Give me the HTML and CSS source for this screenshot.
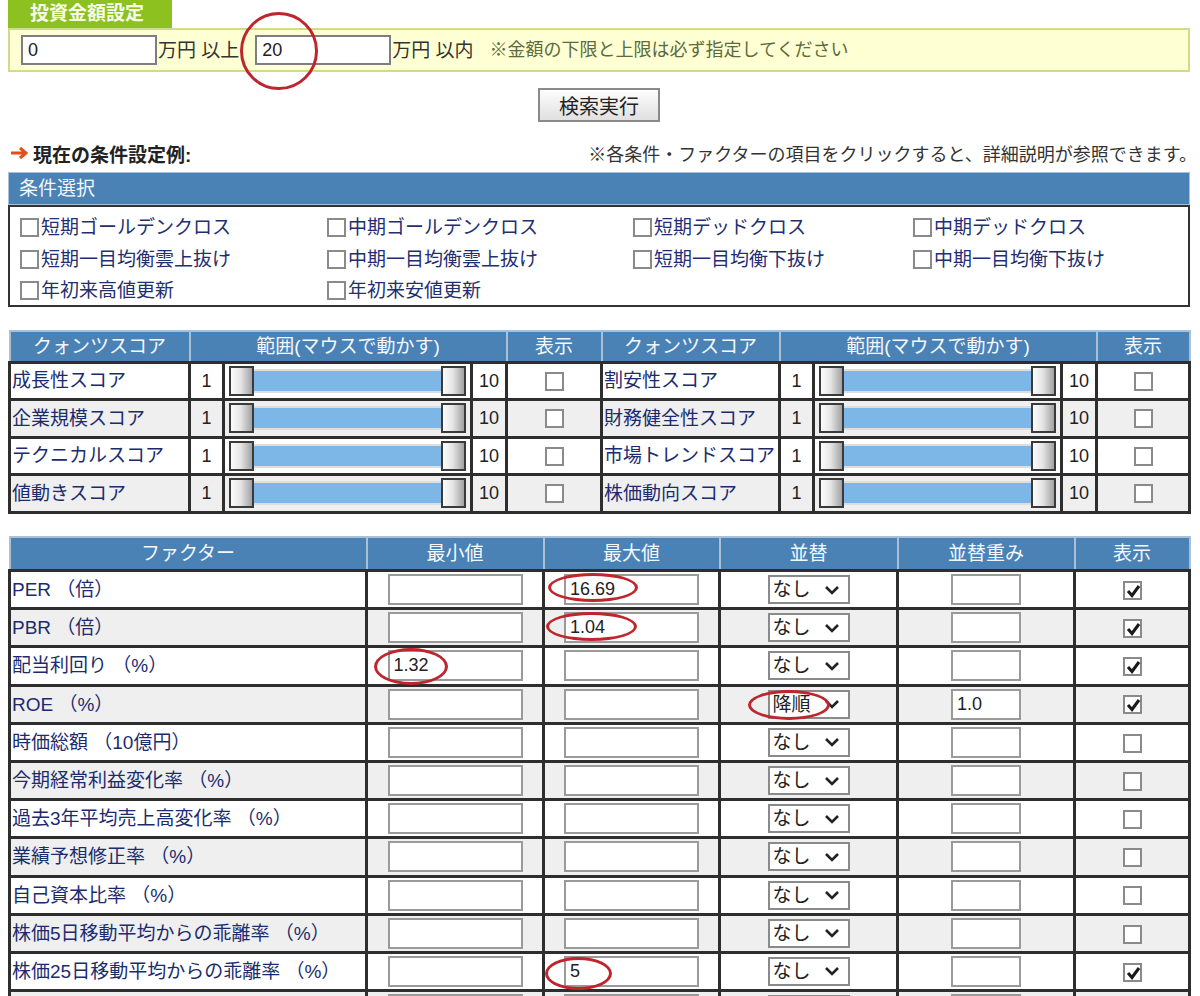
FILE: index.html
```html
<!DOCTYPE html>
<html lang="ja">
<head>
	<meta charset="UTF-8">
	<title>スクリーニング条件設定</title>
	<link rel="stylesheet" href="styles.css">
</head>
<body>
<div class="page">

	<!-- 投資金額 -->
	<div class="tab">投資金額設定</div>
	<div class="invest-box">
		<input class="amount" type="text" value="0"><span class="unit">万円 以上</span>
		<input class="amount" type="text" value="20"><span class="unit">万円 以内</span>
		<span class="note">※金額の下限と上限は必ず指定してください</span>
	</div>

	<button class="search" type="button">検索実行</button>

	<div class="cond-title">
		<span class="lead"><svg class="arrow" width="18" height="14" viewBox="0 0 18 14"><path d="M1 7 H15 M10 2 L16 7 L10 12" fill="none" stroke="#e0501a" stroke-width="3"/></svg>現在の条件設定例:</span>
		<span class="hint">※各条件・ファクターの項目をクリックすると、詳細説明が参照できます。</span>
	</div>

	<!-- 条件選択 -->
	<div class="jouken">
		<div class="jouken-head">条件選択</div>
		<div class="jouken-body">
			<label class="item"><span class="cb"></span>短期ゴールデンクロス</label>
			<label class="item"><span class="cb"></span>中期ゴールデンクロス</label>
			<label class="item"><span class="cb"></span>短期デッドクロス</label>
			<label class="item"><span class="cb"></span>中期デッドクロス</label>
			<label class="item"><span class="cb"></span>短期一目均衡雲上抜け</label>
			<label class="item"><span class="cb"></span>中期一目均衡雲上抜け</label>
			<label class="item"><span class="cb"></span>短期一目均衡下抜け</label>
			<label class="item"><span class="cb"></span>中期一目均衡下抜け</label>
			<label class="item"><span class="cb"></span>年初来高値更新</label>
			<label class="item"><span class="cb"></span>年初来安値更新</label>
		</div>
	</div>

	<!-- クォンツスコア -->
	<table class="grid quants">
		<colgroup>
			<col style="width:180px"><col style="width:34px"><col style="width:248px"><col style="width:35px"><col style="width:95px">
			<col style="width:178px"><col style="width:34px"><col style="width:248px"><col style="width:35px"><col style="width:93px">
		</colgroup>
		<thead>
			<tr>
				<th>クォンツスコア</th><th colspan="3">範囲(マウスで動かす)</th><th>表示</th>
				<th>クォンツスコア</th><th colspan="3">範囲(マウスで動かす)</th><th>表示</th>
			</tr>
		</thead>
		<tbody>
			<tr>
				<td class="name">成長性スコア</td><td class="num">1</td><td><div class="slider"><span class="handle"></span><span class="track"></span><span class="handle"></span></div></td><td class="num">10</td><td class="show"><span class="cb"></span></td>
				<td class="name">割安性スコア</td><td class="num">1</td><td><div class="slider"><span class="handle"></span><span class="track"></span><span class="handle"></span></div></td><td class="num">10</td><td class="show"><span class="cb"></span></td>
			</tr>
			<tr>
				<td class="name">企業規模スコア</td><td class="num">1</td><td><div class="slider"><span class="handle"></span><span class="track"></span><span class="handle"></span></div></td><td class="num">10</td><td class="show"><span class="cb"></span></td>
				<td class="name">財務健全性スコア</td><td class="num">1</td><td><div class="slider"><span class="handle"></span><span class="track"></span><span class="handle"></span></div></td><td class="num">10</td><td class="show"><span class="cb"></span></td>
			</tr>
			<tr>
				<td class="name">テクニカルスコア</td><td class="num">1</td><td><div class="slider"><span class="handle"></span><span class="track"></span><span class="handle"></span></div></td><td class="num">10</td><td class="show"><span class="cb"></span></td>
				<td class="name">市場トレンドスコア</td><td class="num">1</td><td><div class="slider"><span class="handle"></span><span class="track"></span><span class="handle"></span></div></td><td class="num">10</td><td class="show"><span class="cb"></span></td>
			</tr>
			<tr>
				<td class="name">値動きスコア</td><td class="num">1</td><td><div class="slider"><span class="handle"></span><span class="track"></span><span class="handle"></span></div></td><td class="num">10</td><td class="show"><span class="cb"></span></td>
				<td class="name">株価動向スコア</td><td class="num">1</td><td><div class="slider"><span class="handle"></span><span class="track"></span><span class="handle"></span></div></td><td class="num">10</td><td class="show"><span class="cb"></span></td>
			</tr>
		</tbody>
	</table>

	<!-- ファクター -->
	<table class="grid factors">
		<colgroup>
			<col style="width:357px"><col style="width:177px"><col style="width:176px"><col style="width:178px"><col style="width:177px"><col style="width:115px">
		</colgroup>
		<thead>
			<tr><th>ファクター</th><th>最小値</th><th>最大値</th><th>並替</th><th>並替重み</th><th>表示</th></tr>
		</thead>
		<tbody>
			<tr>
				<td class="name">PER （倍）</td>
				<td><input class="val" type="text" value=""></td>
				<td><input class="val" type="text" value="16.69"></td>
				<td><span class="sel">なし<svg width="16" height="10" viewBox="0 0 16 10"><path d="M2 2 L8 8 L14 2" fill="none" stroke="#222" stroke-width="2.6"/></svg></span></td>
				<td><input class="weight" type="text" value=""></td>
				<td><span class="cb on"><svg width="17" height="17" viewBox="0 0 17 17"><path d="M3 8 L7 12.5 L14 3" fill="none" stroke="#1a1a1a" stroke-width="3"/></svg></span></td>
			</tr>
			<tr>
				<td class="name">PBR （倍）</td>
				<td><input class="val" type="text" value=""></td>
				<td><input class="val" type="text" value="1.04"></td>
				<td><span class="sel">なし<svg width="16" height="10" viewBox="0 0 16 10"><path d="M2 2 L8 8 L14 2" fill="none" stroke="#222" stroke-width="2.6"/></svg></span></td>
				<td><input class="weight" type="text" value=""></td>
				<td><span class="cb on"><svg width="17" height="17" viewBox="0 0 17 17"><path d="M3 8 L7 12.5 L14 3" fill="none" stroke="#1a1a1a" stroke-width="3"/></svg></span></td>
			</tr>
			<tr>
				<td class="name">配当利回り （%）</td>
				<td><input class="val" type="text" value="1.32"></td>
				<td><input class="val" type="text" value=""></td>
				<td><span class="sel">なし<svg width="16" height="10" viewBox="0 0 16 10"><path d="M2 2 L8 8 L14 2" fill="none" stroke="#222" stroke-width="2.6"/></svg></span></td>
				<td><input class="weight" type="text" value=""></td>
				<td><span class="cb on"><svg width="17" height="17" viewBox="0 0 17 17"><path d="M3 8 L7 12.5 L14 3" fill="none" stroke="#1a1a1a" stroke-width="3"/></svg></span></td>
			</tr>
			<tr>
				<td class="name">ROE （%）</td>
				<td><input class="val" type="text" value=""></td>
				<td><input class="val" type="text" value=""></td>
				<td><span class="sel">降順<svg width="16" height="10" viewBox="0 0 16 10"><path d="M2 2 L8 8 L14 2" fill="none" stroke="#222" stroke-width="2.6"/></svg></span></td>
				<td><input class="weight" type="text" value="1.0"></td>
				<td><span class="cb on"><svg width="17" height="17" viewBox="0 0 17 17"><path d="M3 8 L7 12.5 L14 3" fill="none" stroke="#1a1a1a" stroke-width="3"/></svg></span></td>
			</tr>
			<tr>
				<td class="name">時価総額 （10億円）</td>
				<td><input class="val" type="text" value=""></td>
				<td><input class="val" type="text" value=""></td>
				<td><span class="sel">なし<svg width="16" height="10" viewBox="0 0 16 10"><path d="M2 2 L8 8 L14 2" fill="none" stroke="#222" stroke-width="2.6"/></svg></span></td>
				<td><input class="weight" type="text" value=""></td>
				<td><span class="cb"></span></td>
			</tr>
			<tr>
				<td class="name">今期経常利益変化率 （%）</td>
				<td><input class="val" type="text" value=""></td>
				<td><input class="val" type="text" value=""></td>
				<td><span class="sel">なし<svg width="16" height="10" viewBox="0 0 16 10"><path d="M2 2 L8 8 L14 2" fill="none" stroke="#222" stroke-width="2.6"/></svg></span></td>
				<td><input class="weight" type="text" value=""></td>
				<td><span class="cb"></span></td>
			</tr>
			<tr>
				<td class="name">過去3年平均売上高変化率 （%）</td>
				<td><input class="val" type="text" value=""></td>
				<td><input class="val" type="text" value=""></td>
				<td><span class="sel">なし<svg width="16" height="10" viewBox="0 0 16 10"><path d="M2 2 L8 8 L14 2" fill="none" stroke="#222" stroke-width="2.6"/></svg></span></td>
				<td><input class="weight" type="text" value=""></td>
				<td><span class="cb"></span></td>
			</tr>
			<tr>
				<td class="name">業績予想修正率 （%）</td>
				<td><input class="val" type="text" value=""></td>
				<td><input class="val" type="text" value=""></td>
				<td><span class="sel">なし<svg width="16" height="10" viewBox="0 0 16 10"><path d="M2 2 L8 8 L14 2" fill="none" stroke="#222" stroke-width="2.6"/></svg></span></td>
				<td><input class="weight" type="text" value=""></td>
				<td><span class="cb"></span></td>
			</tr>
			<tr>
				<td class="name">自己資本比率 （%）</td>
				<td><input class="val" type="text" value=""></td>
				<td><input class="val" type="text" value=""></td>
				<td><span class="sel">なし<svg width="16" height="10" viewBox="0 0 16 10"><path d="M2 2 L8 8 L14 2" fill="none" stroke="#222" stroke-width="2.6"/></svg></span></td>
				<td><input class="weight" type="text" value=""></td>
				<td><span class="cb"></span></td>
			</tr>
			<tr>
				<td class="name">株価5日移動平均からの乖離率 （%）</td>
				<td><input class="val" type="text" value=""></td>
				<td><input class="val" type="text" value=""></td>
				<td><span class="sel">なし<svg width="16" height="10" viewBox="0 0 16 10"><path d="M2 2 L8 8 L14 2" fill="none" stroke="#222" stroke-width="2.6"/></svg></span></td>
				<td><input class="weight" type="text" value=""></td>
				<td><span class="cb"></span></td>
			</tr>
			<tr>
				<td class="name">株価25日移動平均からの乖離率 （%）</td>
				<td><input class="val" type="text" value=""></td>
				<td><input class="val" type="text" value="5"></td>
				<td><span class="sel">なし<svg width="16" height="10" viewBox="0 0 16 10"><path d="M2 2 L8 8 L14 2" fill="none" stroke="#222" stroke-width="2.6"/></svg></span></td>
				<td><input class="weight" type="text" value=""></td>
				<td><span class="cb on"><svg width="17" height="17" viewBox="0 0 17 17"><path d="M3 8 L7 12.5 L14 3" fill="none" stroke="#1a1a1a" stroke-width="3"/></svg></span></td>
			</tr>
			<tr class="more">
				<td class="name"></td>
				<td><input class="val" type="text" value=""></td>
				<td><input class="val" type="text" value=""></td>
				<td><span class="sel"></span></td>
				<td><input class="weight" type="text" value=""></td>
				<td><span class="cb"></span></td>
			</tr>
		</tbody>
	</table>

	<!-- 赤丸の書き込み -->
	<span class="mark m-20"></span>
	<span class="mark m-per"></span>
	<span class="mark m-pbr"></span>
	<span class="mark m-div"></span>
	<span class="mark m-roe"></span>
	<span class="mark m-25"></span>
</div>
</body>
</html>
```

FILE: styles.css
```css
*{
	margin: 0;
	padding: 0;
	box-sizing: border-box;
}
body{
	font-family: "Liberation Sans", "Noto Sans CJK JP", sans-serif;
	font-size: 19px;
	color: #333;
	background: #fff;
	overflow: hidden;
}
.page{
	position: relative;
	width: 1182px;
	margin: 0 8px;
}

/* 投資金額設定 */
.tab{
	width: 164px;
	height: 28px;
	line-height: 28px;
	padding-left: 22px;
	background: #8cc11f;
	color: #f6fbe8;
	font-weight: bold;
	font-size: 19px;
}
.invest-box{
	display: flex;
	align-items: center;
	height: 44px;
	padding-left: 11px;
	background: #ffffd4;
	border: 2px solid #cfdc8a;
}
.amount{
	width: 136px;
	height: 30px;
	border: 2px solid #7e7e7e;
	padding-left: 5px;
	font-family: "Liberation Sans", sans-serif;
	font-size: 18px;
	color: #222;
	background: #fff;
	outline: none;
}
.unit{
	margin: 0 16px 0 1px;
	color: #333;
	line-height: 1;
}
.note{
	font-size: 18px;
	color: #5c6a3c;
	line-height: 1;
}

.search{
	display: block;
	width: 122px;
	height: 34px;
	margin: 16px auto 0;
	border: 2px solid #8a8a8a;
	background: linear-gradient(#fdfdfd, #e0e0e0);
	font-family: "Liberation Sans", "Noto Sans CJK JP", sans-serif;
	font-size: 20px;
	color: #222;
}

.cond-title{
	display: flex;
	justify-content: space-between;
	align-items: center;
	height: 30px;
	margin-top: 16px;
}
.lead{
	display: flex;
	align-items: center;
	font-weight: bold;
	font-size: 19px;
	color: #222;
	padding-left: 2px;
}
.arrow{
	margin-right: 5px;
}
.hint{
	font-size: 18px;
	color: #333;
	margin-right: -7px;
}

/* 条件選択 */
.jouken{
	margin-top: 4px;
}
.jouken-head{
	height: 33px;
	line-height: 31px;
	padding-left: 10px;
	background: #4a82b6;
	border: 1px solid #a9c0d6;
	color: #f4f8fc;
}
.jouken-body{
	display: grid;
	grid-template-columns: 307px 306px 280px 1fr;
	grid-auto-rows: 31.5px;
	height: 102px;
	padding: 5px 0 0 10px;
	border: 2px solid #333;
	background: #fff;
}
.item{
	display: flex;
	align-items: center;
	color: #1f2f70;
	line-height: 1;
}
.item .cb{
	margin-right: 2px;
}

.cb{
	display: inline-block;
	width: 19px;
	height: 19px;
	border: 2px solid #8a8a8a;
	background: #fff;
	vertical-align: middle;
}
.cb svg{
	display: block;
}

/* 表 */
.grid{
	width: 1180px;
	table-layout: fixed;
	border-collapse: collapse;
	border: 2px solid #a9bccd;
	margin-top: 23px;
}
.grid th{
	height: 31px;
	background: #4a82b6;
	color: #f4f8fc;
	font-weight: normal;
	border: 2px solid #a9c0d6;
	line-height: 1;
}
.grid td{
	height: 37.5px;
	border: 3px solid #2e2e2e;
	background: #fff;
	text-align: center;
	line-height: 1;
	padding: 0;
}
.grid tbody tr:nth-child(even) td{
	background: #efefef;
}
.grid td.name{
	text-align: left;
	padding-left: 1px;
	color: #1b2c6e;
	white-space: nowrap;
}
.quants td.num{
	font-size: 18px;
	color: #222;
}
.factors{
	margin-top: 22px;
}
.factors th{
	height: 34px;
}
.factors td{
	height: 38.2px;
}

/* スライダー */
.slider{
	display: flex;
	align-items: center;
	height: 30px;
	margin: 0 4px;
}
.handle{
	width: 25px;
	height: 30px;
	border: 2px solid #3a3a3a;
	background: linear-gradient(to right, #fbfbfb, #e6e6e6 45%, #a2a2a2);
}
.track{
	flex: 1;
	height: 24px;
	background: #7db7e7;
	border-top: 2px solid #dedede;
	border-bottom: 2px solid #dedede;
}

/* 入力 */
.val, .weight{
	height: 31px;
	border: 2px solid #9a9a9a;
	background: #fff;
	padding-left: 4px;
	font-family: "Liberation Sans", sans-serif;
	font-size: 18px;
	color: #222;
	vertical-align: middle;
	outline: none;
}
.val{
	width: 135px;
}
.weight{
	width: 70px;
}
.sel{
	display: inline-flex;
	align-items: center;
	justify-content: space-between;
	width: 82px;
	height: 29px;
	padding: 0 8px 0 3px;
	border: 2px solid #8a8a8a;
	background: #fff;
	color: #222;
	vertical-align: middle;
}

/* 赤丸 */
.mark{
	position: absolute;
	border: 3px solid #bf252c;
	border-radius: 50%;
}
.m-20{ left: 232px; top: 12px; width: 78px; height: 78px; }
.m-per{ left: 540px; top: 573px; width: 90px; height: 29px; }
.m-pbr{ left: 538px; top: 612px; width: 91px; height: 29px; }
.m-div{ left: 366px; top: 648px; width: 74px; height: 37px; }
.m-roe{ left: 740px; top: 690px; width: 82px; height: 30px; }
.m-25{ left: 537px; top: 957px; width: 67px; height: 33px; }
```
